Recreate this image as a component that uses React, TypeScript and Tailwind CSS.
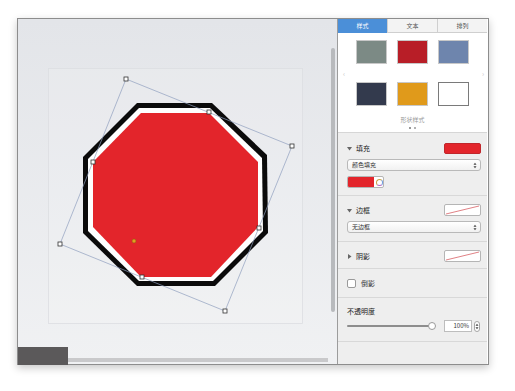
import React from 'react';

const font = { fontFamily: '"Noto Sans CJK SC", "Noto Sans", sans-serif' };

// octagon layers, in page coordinates
const outer = '138,103 213,103 268,155 269,233 216,286 138,286 84,233 84,157';
const inner = '140,108 211,108 263,158 264,231 214,281 140,281 89,231 89,159';
const fill = '142,113 210,113 259,162 259,227 212,277 142,277 94,227 94,162';

const handles: [number, number][] = [
  [127, 79], [293, 146], [226, 311], [61, 244],
  [210, 112], [94, 162], [260, 228], [143, 277],
];

function Canvas() {
  return (
    <div className="flex w-[319px] flex-col bg-linear-to-b from-[#e3e5e9] to-[#f0f1f3]">
      <div className="flex flex-1">
        <svg width="313" height="328" viewBox="19 19 313 328" className="block">
          <rect x="49.5" y="68.5" width="254" height="255" fill="#ffffff" fillOpacity="0.12" stroke="#dcdee2" strokeWidth="0.8" />
          <polygon points={outer} fill="#0b0b0b" />
          <polygon points={inner} fill="#ffffff" />
          <polygon points={fill} fill="#e3252b" />
          <polygon points="127,79 293,146 226,311 61,244" fill="none" stroke="#8f9fbf" strokeWidth="0.7" />
          {handles.map(([x, y], i) => (
            <rect key={i} x={x - 2} y={y - 2} width="4" height="4" fill="#fff" stroke="#333" strokeWidth="0.8" />
          ))}
          <circle cx="135" cy="241" r="2" fill="#e0a020" stroke="#8a5a10" strokeWidth="0.5" />
        </svg>
        <div className="flex w-[6px] flex-col pt-[29px]">
          <div className="h-[264px] w-[4px] rounded-full bg-[#b8babd]" />
        </div>
      </div>
      <div className="flex h-[18px] items-end">
        <div className="h-[18px] w-[50px] bg-[#5b595a]" />
        <div className="mb-[3px] h-[4px] w-[260px] bg-[#c9c9cb]" />
      </div>
    </div>
  );
}

function Swatch({ color, border }: { color: string; border?: boolean }) {
  return (
    <div
      className={`h-[24px] w-[31px] ${border ? 'border border-[#7a7a7a]' : 'border border-[#c8c8c8]'}`}
      style={{ backgroundColor: color }}
    />
  );
}

function NoneSwatch() {
  return (
    <div className="h-[12px] w-[37px] rounded-[2px] border border-[#b5b5b5] bg-white">
      <svg width="35" height="10" className="block">
        <line x1="1" y1="9" x2="34" y2="1" stroke="#d24b50" strokeWidth="0.7" />
      </svg>
    </div>
  );
}

function UpDown() {
  return (
    <svg width="4" height="7" viewBox="0 0 4 7" className="block">
      <path d="M0.5 2.8 L2 0.8 L3.5 2.8 Z M0.5 4.2 L2 6.2 L3.5 4.2 Z" fill="#444" />
    </svg>
  );
}

function Select({ label }: { label: string }) {
  return (
    <div className="flex h-[12px] w-[134px] items-center justify-between rounded-[3px] border border-[#b9b9b9] bg-linear-to-b from-white to-[#f1f1f1] pl-[4px] pr-[3px]">
      <span className="text-[6px] leading-none text-[#333]">{label}</span>
      <UpDown />
    </div>
  );
}

function Header({ open, label, children }: { open: boolean; label: string; children?: React.ReactNode }) {
  return (
    <div className="flex h-[12px] items-center justify-between">
      <div className="flex items-center gap-[4px] text-[7px] leading-none text-[#222]">
        <svg width="5" height="5" viewBox="0 0 5 5" className="block">
          {open ? <path d="M0 1 L5 1 L2.5 4.5 Z" fill="#666" /> : <path d="M1 0 L4.5 2.5 L1 5 Z" fill="#666" />}
        </svg>
        <span>{label}</span>
      </div>
      {children}
    </div>
  );
}

function Sidebar() {
  const tabs = ['样式', '文本', '排列'];
  return (
    <div className="flex w-[150px] flex-col border-l border-[#9c9c9c] bg-[#eeeeee]">
      <div className="flex h-[14px]">
        {tabs.map((t, i) => (
          <div
            key={t}
            className={`flex flex-1 items-center justify-center text-[6px] leading-none ${
              i === 0
                ? 'bg-[#4b8fd8] text-white'
                : 'border-b border-l border-[#cfcfcf] bg-[#f3f3f3] text-[#555]'
            }`}
          >
            {t}
          </div>
        ))}
      </div>

      <div className="relative flex h-[100px] flex-col items-center border-b border-[#d6d6d6] bg-white pt-[7px]">
        <div className="grid grid-cols-3 gap-x-[10px] gap-y-[18px]">
          <Swatch color="#7c8a85" />
          <Swatch color="#b81e27" />
          <Swatch color="#6e85ad" />
          <Swatch color="#333a4d" />
          <Swatch color="#e09a1b" />
          <Swatch color="#ffffff" border />
        </div>
        <div className="mt-[11px] text-[6px] leading-none text-[#9a9a9a]">形状样式</div>
        <div className="mt-[4px] flex gap-[3px]">
          <div className="h-[2px] w-[2px] rounded-full bg-[#777]" />
          <div className="h-[2px] w-[2px] rounded-full bg-[#999]" />
        </div>
        <span className="absolute left-[5px] top-[35px] text-[7px] text-[#c8c8c8]">‹</span>
        <span className="absolute right-[3px] top-[35px] text-[7px] text-[#c8c8c8]">›</span>
      </div>

      <div className="flex h-[63px] flex-col gap-[5px] border-b border-[#d8d8d8] pl-[9px] pr-[6px] pt-[9px]">
        <Header open label="填充">
          <div className="h-[11px] w-[37px] rounded-[2px] border border-[#c0262b] bg-[#e3252b]" />
        </Header>
        <Select label="颜色填充" />
        <div className="flex h-[12px] w-[37px] items-center overflow-hidden rounded-[2px] border border-[#b5b5b5] bg-white">
          <div className="h-full w-[26px] bg-[#e3252b]" />
          <div className="ml-[2px] h-[7px] w-[7px] rounded-full border-[1.5px] border-[#c8a24a] border-r-[#6d9be0] border-b-[#b36ac4] bg-white" />
        </div>
      </div>

      <div className="flex h-[46px] flex-col gap-[5px] border-b border-[#d8d8d8] pl-[9px] pr-[6px] pt-[8px]">
        <Header open label="边框">
          <NoneSwatch />
        </Header>
        <Select label="无边框" />
      </div>

      <div className="flex h-[27px] flex-col border-b border-[#d8d8d8] pl-[9px] pr-[6px] pt-[8px]">
        <Header open={false} label="阴影">
          <NoneSwatch />
        </Header>
      </div>

      <div className="flex h-[29px] items-center gap-[5px] border-b border-[#d8d8d8] pl-[9px]">
        <div className="h-[9px] w-[9px] rounded-[2px] border border-[#9a9a9a] bg-white" />
        <span className="text-[7px] leading-none text-[#333]">倒影</span>
      </div>

      <div className="flex h-[44px] flex-col border-b border-[#d8d8d8] pl-[9px] pr-[6px] pt-[10px]">
        <span className="text-[7px] leading-none text-[#222]">不透明度</span>
        <div className="mt-[5px] flex items-center">
          <div className="relative flex h-[9px] w-[90px] items-center">
            <div className="h-[2px] w-[85px] rounded-full bg-[#8d8d8d]" />
            <div className="absolute left-[81px] h-[8px] w-[8px] rounded-full border border-[#999] bg-white" />
          </div>
          <div className="ml-[7px] flex h-[12px] w-[28px] items-center justify-end border border-[#bdbdbd] bg-white pr-[2px] text-[6px] leading-none text-[#333]">
            100%
          </div>
          <div className="ml-[2px] flex h-[11px] w-[6px] items-center justify-center rounded-full border border-[#a5a5a5] bg-white">
            <UpDown />
          </div>
        </div>
      </div>

      <div className="flex-1" />
    </div>
  );
}

export default function App() {
  return (
    <div className="h-[391px] w-[515px] bg-white pl-[17px] pt-[18px]" style={font}>
      <div className="flex h-[347px] w-[472px] border border-[#8d8d8d] shadow-[0_3px_8px_rgba(0,0,0,0.22)]">
        <Canvas />
        <Sidebar />
      </div>
    </div>
  );
}
